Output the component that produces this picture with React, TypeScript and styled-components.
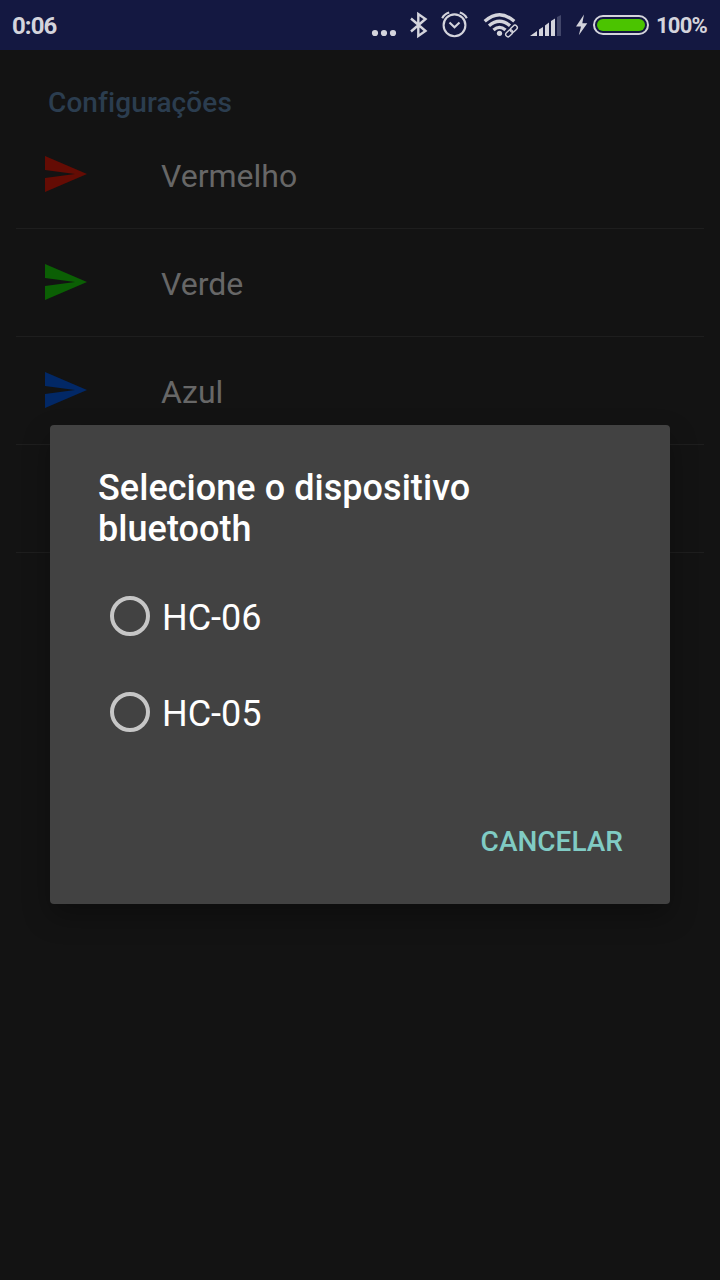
import React from 'react';
import styled, { createGlobalStyle } from 'styled-components';

const GlobalStyle = createGlobalStyle`
  *, *::before, *::after { box-sizing: border-box; }
  body { margin: 0; background: #131313; font-family: Roboto, "Liberation Sans", sans-serif; }
`;

const Screen = styled.div`
  position: relative;
  width: 720px;
  height: 1280px;
  overflow: hidden;
  background: #131313;
`;

const StatusBar = styled.header`
  display: flex;
  align-items: center;
  justify-content: space-between;
  height: 50px;
  padding: 0 12px;
  background: #141841;
  color: #d4d4dc;
`;

const Clock = styled.time`
  font-size: 24px;
  font-weight: 700;
  line-height: 28px;
  padding-top: 2px;
  letter-spacing: -0.9px;
`;

const StatusIcons = styled.div`
  display: flex;
  align-items: center;
`;

const StatusIcon = styled.svg`
  display: block;
  height: 50px;
  flex: none;
`;

const Percent = styled.span`
  width: 52px;
  margin-left: 4px;
  padding-top: 2px;
  font-size: 22px;
  font-weight: 700;
  line-height: 26px;
  letter-spacing: -0.8px;
  white-space: nowrap;
`;

const Page = styled.main`
  display: flex;
  flex-direction: column;
`;

const SectionTitle = styled.h2`
  margin: 0;
  padding: 36px 48px 2px;
  font-size: 28px;
  line-height: 33px;
  font-weight: 500;
  letter-spacing: 0.1px;
  color: #2b3d4f;
`;

const Row = styled.div`
  display: flex;
  align-items: center;
  height: 108px;
  margin: 0 16px;
  padding-left: 25px;
  border-bottom: 1px solid #1e1e1e;
`;

const SendIcon = styled.svg<{ $color: string }>`
  width: 48px;
  height: 48px;
  margin-right: 72px;
  margin-top: -1px;
  fill: ${(p) => p.$color};
`;

const RowLabel = styled.span`
  padding-top: 2px;
  font-size: 32px;
  line-height: 38px;
  color: #676767;
`;

const Dialog = styled.section`
  position: absolute;
  left: 50px;
  top: 425px;
  width: 620px;
  height: 479px;
  display: flex;
  flex-direction: column;
  padding: 43px 48px 0;
  border-radius: 4px;
  background: #424242;
  box-shadow: 0 12px 28px rgba(0, 0, 0, 0.3);
`;

const DialogTitle = styled.h1`
  margin: 0 0 18px;
  font-size: 36px;
  line-height: 41px;
  font-weight: 500;
  letter-spacing: 0.05px;
  color: #fff;
`;

const Option = styled.label`
  display: flex;
  align-items: center;
  height: 96px;
  padding-left: 12px;
  gap: 12px;
`;

const Radio = styled.span`
  width: 40px;
  height: 40px;
  border: 4px solid #c6c6c6;
  border-radius: 50%;
`;

const OptionLabel = styled.span`
  padding-top: 4px;
  font-size: 36px;
  line-height: 42px;
  color: #fff;
`;

const CancelButton = styled.button`
  align-self: flex-end;
  margin: 65px -1px 0 0;
  padding: 0;
  border: 0;
  background: none;
  font-family: inherit;
  font-size: 28px;
  line-height: 34px;
  font-weight: 500;
  color: #80cbc4;
`;

const Send = ({ color }: { color: string }) => (
  <SendIcon $color={color} viewBox="0 0 24 24">
    <path d="M2.01 21L23 12 2.01 3 2 10l15 2-15 2z" />
  </SendIcon>
);

const rows = [
  { label: 'Vermelho', color: '#640c04' },
  { label: 'Verde', color: '#0b5f04' },
  { label: 'Azul', color: '#022866' },
  { label: '', color: 'transparent' },
];

const devices = ['HC-06', 'HC-05'];

const ink = '#d4d4dc';

export default function App() {
  return (
    <>
      <GlobalStyle />
      <Screen>
        <StatusBar>
          <Clock>0:06</Clock>
          <StatusIcons>
            <StatusIcon width="34" viewBox="368 0 34 50" fill={ink}>
              <circle cx="375" cy="33" r="3.1" />
              <circle cx="384" cy="33" r="3.1" />
              <circle cx="393" cy="33" r="3.1" />
            </StatusIcon>
            <StatusIcon width="34" viewBox="402 0 34 50" fill="none" stroke={ink} strokeWidth="2.4">
              <path d="M411 18.500L425.500 31L418.300 36V14L425.500 19L411 31.500" />
            </StatusIcon>
            <StatusIcon width="38" viewBox="436 0 38 50" fill="none" stroke={ink} strokeWidth="2.1">
              <circle cx="454.5" cy="25.3" r="10.9" />
              <path d="M449.5 22.5l5 4.7 5-4.700M442.200 18.200q2-4 7-5.600M466.800 18.200q-2-4-7-5.600" />
            </StatusIcon>
            <StatusIcon width="50" viewBox="474 0 50 50" fill="none" stroke={ink} strokeWidth="3.3">
              <path d="M484.700 21.300Q499.500 8.300 514.300 21.300M489 25.800Q499.500 16.800 510 25.800M493.500 30Q499.500 24.800 505.500 30" />
              <circle cx="499.500" cy="33.300" r="2.600" fill={ink} stroke="none" />
              <g strokeWidth="1.4" transform="rotate(-45 511.500 31)">
                <rect x="504.300" y="28.700" width="8" height="4.600" rx="2.300" />
                <rect x="510.700" y="28.700" width="8" height="4.600" rx="2.300" />
              </g>
            </StatusIcon>
            <StatusIcon width="44" viewBox="524 0 44 50" fill={ink}>
              <path d="M530 36l7-5v5zM539 29.500l4-2.500v9h-4zM545 25.500l4-3v13.500h-4zM551 21l4-2.500v17.500h-4z" />
              <path d="M557 17l4-2v21h-4z" fill="#42466a" />
            </StatusIcon>
            <StatusIcon width="22" viewBox="568 0 22 50" fill={ink}>
              <path d="M584 14.500l-8 12h5l-2.200 8.800 8.500-12h-5z" />
            </StatusIcon>
            <StatusIcon width="62" viewBox="590 0 62 50">
              <rect x="594" y="16" width="54" height="18" rx="9" fill="none" stroke={ink} strokeWidth="2" />
              <rect x="597" y="19" width="48" height="12" rx="6" fill="#4bc400" />
            </StatusIcon>
            <Percent>100%</Percent>
          </StatusIcons>
        </StatusBar>
        <Page>
          <SectionTitle>Configurações</SectionTitle>
          {rows.map((r, i) => (
            <Row key={i}>
              <Send color={r.color} />
              <RowLabel>{r.label}</RowLabel>
            </Row>
          ))}
        </Page>
        <Dialog role="dialog">
          <DialogTitle>Selecione o dispositivo bluetooth</DialogTitle>
          {devices.map((d) => (
            <Option key={d}>
              <Radio />
              <OptionLabel>{d}</OptionLabel>
            </Option>
          ))}
          <CancelButton>CANCELAR</CancelButton>
        </Dialog>
      </Screen>
    </>
  );
}
